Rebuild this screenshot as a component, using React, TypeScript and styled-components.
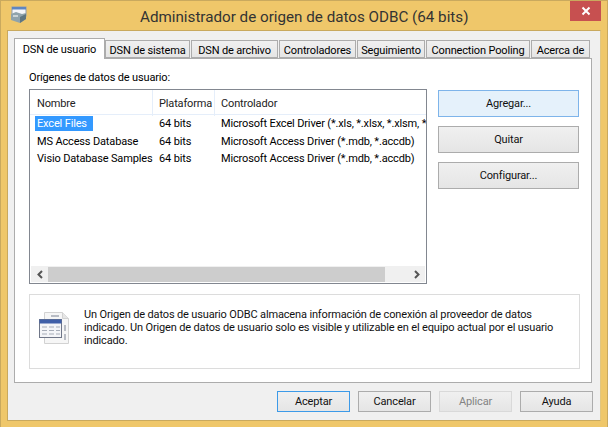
import styled, { createGlobalStyle } from "styled-components";

const GlobalStyle = createGlobalStyle`
  html, body {
    margin: 0;
    padding: 0;
    background: #efc76a;
  }
  * {
    box-sizing: border-box;
  }
`;

const Window = styled.div`
  width: 608px;
  height: 427px;
  display: flex;
  flex-direction: column;
  padding: 0 6px 6px 6px;
  background: #efc76a;
  border: 1px solid #c9a95e;
  border-bottom: 0;
  overflow: hidden;
  font-family: Roboto, "Open Sans", sans-serif;
  font-size: 11px;
  letter-spacing: -0.15px;
  color: #000;
`;

const TitleBar = styled.div`
  height: 29px;
  flex: none;
  display: flex;
  align-items: flex-start;
`;

const TitleIcon = styled.svg`
  width: 18px;
  height: 18px;
  margin: 5px 0 0 3px;
  flex: none;
`;

const Title = styled.div`
  flex: 1;
  margin: 5px 0 0 112px;
  font-size: 15.2px;
  letter-spacing: 0;
  line-height: 22px;
  color: #333;
  white-space: nowrap;
`;

const CloseButton = styled.div`
  width: 31px;
  height: 20px;
  display: flex;
  align-items: center;
  justify-content: center;
  background: #c75050;
`;

const Body = styled.div`
  flex: 1;
  display: flex;
  flex-direction: column;
  padding: 7px 7px 0 6px;
  background: #f0f0f0;
  border: 1px solid #c9a95e;
  border-right-color: #e2c67f;
`;

const TabRow = styled.div`
  display: flex;
  align-items: flex-end;
  height: 20px;
  position: relative;
  z-index: 1;
`;

const Tab = styled.div<{ $width: number; $active?: boolean }>`
  width: ${(p) => p.$width}px;
  height: ${(p) => (p.$active ? 21 : 18)}px;
  margin-right: ${(p) => (p.$active ? 0 : 1)}px;
  margin-bottom: ${(p) => (p.$active ? -1 : 0)}px;
  padding-top: ${(p) => (p.$active ? 0 : 2)}px;
  display: flex;
  align-items: center;
  justify-content: center;
  background: ${(p) => (p.$active ? "#fff" : "linear-gradient(#f0f0f0, #e5e5e5)")};
  border: 1px solid #acacac;
  border-bottom: ${(p) => (p.$active ? "0" : "1px solid #acacac")};
  white-space: nowrap;
  overflow: hidden;
`;

const Panel = styled.div`
  width: 578px;
  height: 325px;
  display: flex;
  flex-direction: column;
  padding: 10px 10px 0 14px;
  background: #fff;
  border: 1px solid #acacac;
`;

const FieldLabel = styled.div`
  height: 16px;
  padding-top: 1px;
  line-height: 16px;
  margin-bottom: 4px;
`;

const Columns = styled.div`
  display: flex;
  gap: 11px;
`;

const ListBox = styled.div`
  width: 398px;
  height: 195px;
  display: flex;
  flex-direction: column;
  border: 1px solid #828790;
`;

const ListHeader = styled.div`
  height: 25px;
  flex: none;
  display: grid;
  grid-template-columns: 123px 62px 1fr;
  border-bottom: 1px solid #e5eefa;
`;

const HeaderCell = styled.div<{ $inset: number; $last?: boolean }>`
  padding-top: 1px;
  line-height: 25px;
  padding-left: ${(p) => p.$inset}px;
  color: #222;
  border-right: ${(p) => (p.$last ? "0" : "1px solid #e5eefa")};
`;

const Rows = styled.div`
  flex: 1;
`;

const ListRow = styled.div`
  height: 17.5px;
  display: grid;
  grid-template-columns: 124px 62px 1fr;
  padding-left: 5px;
  align-items: center;
  white-space: nowrap;
  overflow: hidden;
`;

const NameCell = styled.div`
  padding-left: 2px;
`;

const SelectedName = styled.span`
  display: inline-block;
  width: 58px;
  margin-left: -2px;
  padding-left: 2px;
  line-height: 15px;
  background: #3399ff;
  color: #fff;
`;

const Cell = styled.div`
  overflow: hidden;
`;

const ScrollBar = styled.div`
  height: 16px;
  flex: none;
  margin: 0 1px 1px 1px;
  display: flex;
  align-items: center;
  background: #f0f0f0;
`;

const ScrollArrow = styled.div`
  width: 17px;
  flex: none;
  display: flex;
  justify-content: center;
`;

const ScrollThumb = styled.div`
  width: 337px;
  height: 15px;
  background: #cdcdcd;
`;

const ScrollRest = styled.div`
  flex: 1;
`;

const SideButtons = styled.div`
  width: 141px;
  display: flex;
  flex-direction: column;
  gap: 9px;
  padding-top: 1px;
`;

const Button = styled.div<{ $hot?: boolean; $default?: boolean; $disabled?: boolean }>`
  display: flex;
  align-items: center;
  justify-content: center;
  background: ${(p) => (p.$hot ? "#e5f1fb" : "linear-gradient(#f0f0f0, #e5e5e5)")};
  border: 1px solid
    ${(p) => (p.$hot ? "#7eb4ea" : p.$default ? "#3c9ae8" : p.$disabled ? "#d9d9d9" : "#acacac")};
  color: ${(p) => (p.$disabled ? "#838383" : "#111")};
`;

const SideButton = styled(Button)`
  height: 27px;
`;

const InfoBox = styled.div`
  width: 551px;
  height: 75px;
  margin-top: 10px;
  display: flex;
  align-items: flex-start;
  padding: 13px 9px 0 9px;
  background: #fff;
  border: 1px solid #dcdcdc;
`;

const InfoIcon = styled.svg`
  width: 32px;
  height: 36px;
  flex: none;
  margin-top: 3px;
`;

const InfoText = styled.div`
  width: 472px;
  margin-left: 13px;
  line-height: 13px;
  color: #111;
`;

const Footer = styled.div`
  display: flex;
  justify-content: flex-end;
  gap: 8px;
  margin-top: 8px;
`;

const FooterButton = styled(Button)`
  width: 73px;
  height: 21px;
`;

const tabs = [
  { label: "DSN de usuario", width: 91, active: true },
  { label: "DSN de sistema", width: 85 },
  { label: "DSN de archivo", width: 87 },
  { label: "Controladores", width: 77 },
  { label: "Seguimiento", width: 68 },
  { label: "Connection Pooling", width: 104 },
  { label: "Acerca de", width: 59 },
];

const sources = [
  { name: "Excel Files", driver: "Microsoft Excel Driver (*.xls, *.xlsx, *.xlsm, *.xlsb)", selected: true },
  { name: "MS Access Database", driver: "Microsoft Access Driver (*.mdb, *.accdb)" },
  { name: "Visio Database Samples", driver: "Microsoft Access Driver (*.mdb, *.accdb)" },
];

export default function App() {
  return (
    <>
      <GlobalStyle />
      <Window>
        <TitleBar>
          <TitleIcon viewBox="0 0 18 18">
            <rect x="2" y="1" width="14" height="9" fill="#f4f6fa" stroke="#8d9cb0" />
            <rect x="2" y="1" width="14" height="2.5" fill="#5f86c0" />
            <path d="M1 8l5-2 6 2 4-1v6l-6 4-9-3z" fill="#8fa3ac" />
            <path d="M10 11l6-3v5l-6 4z" fill="#5f7680" />
            <path d="M3 9h5v2H3z" fill="#c9d3d6" />
          </TitleIcon>
          <Title>Administrador de origen de datos ODBC (64 bits)</Title>
          <CloseButton>
            <svg width="10" height="10" viewBox="0 0 10 10">
              <path d="M1.5 1.5l7 7M8.500 1.5l-7 7" stroke="#fff" strokeWidth="2" />
            </svg>
          </CloseButton>
        </TitleBar>
        <Body>
          <TabRow>
            {tabs.map((tab) => (
              <Tab key={tab.label} $width={tab.width} $active={tab.active}>
                {tab.label}
              </Tab>
            ))}
          </TabRow>
          <Panel>
            <FieldLabel>Orígenes de datos de usuario:</FieldLabel>
            <Columns>
              <ListBox>
                <ListHeader>
                  <HeaderCell $inset={7}>Nombre</HeaderCell>
                  <HeaderCell $inset={6}>Plataforma</HeaderCell>
                  <HeaderCell $inset={6} $last>
                    Controlador
                  </HeaderCell>
                </ListHeader>
                <Rows>
                  {sources.map((source) => (
                    <ListRow key={source.name}>
                      <NameCell>
                        {source.selected ? <SelectedName>{source.name}</SelectedName> : source.name}
                      </NameCell>
                      <Cell>64 bits</Cell>
                      <Cell>{source.driver}</Cell>
                    </ListRow>
                  ))}
                </Rows>
                <ScrollBar>
                  <ScrollArrow>
                    <svg width="6" height="9" viewBox="0 0 6 9">
                      <path d="M5 1L1.500 4.500 5 8" fill="none" stroke="#555" strokeWidth="2" />
                    </svg>
                  </ScrollArrow>
                  <ScrollThumb />
                  <ScrollRest />
                  <ScrollArrow>
                    <svg width="6" height="9" viewBox="0 0 6 9">
                      <path d="M1 1l3.500 3.500L1 8" fill="none" stroke="#555" strokeWidth="2" />
                    </svg>
                  </ScrollArrow>
                </ScrollBar>
              </ListBox>
              <SideButtons>
                <SideButton $hot>Agregar...</SideButton>
                <SideButton>Quitar</SideButton>
                <SideButton>Configurar...</SideButton>
              </SideButtons>
            </Columns>
            <InfoBox>
              <InfoIcon viewBox="0 0 32 36">
                <path d="M5.500 1.500h18l6 6v25h-24z" fill="#f6f6f6" stroke="#d2d2d2" />
                <path d="M23.500 1.500v6h6" fill="#e6e6e6" stroke="#d2d2d2" />
                <path d="M12 5h8M26 14v6M26 23v6" stroke="#b8bcc4" strokeWidth="2" />
                <rect x="0.500" y="8.500" width="22" height="18" fill="#f4f5f8" stroke="#6f7688" />
                <rect x="0.500" y="8.500" width="22" height="4" fill="#3f5fa8" />
                <path d="M3 16h5M10 16h5M17 16h4M3 19.500h5M10 19.500h5M17 19.500h4M3 23h5M10 23h5M17 23h4" stroke="#a7adb8" />
              </InfoIcon>
              <InfoText>
                Un Origen de datos de usuario ODBC almacena información de conexión al proveedor de datos indicado. Un
                Origen de datos de usuario solo es visible y utilizable en el equipo actual por el usuario indicado.
              </InfoText>
            </InfoBox>
          </Panel>
          <Footer>
            <FooterButton $default>Aceptar</FooterButton>
            <FooterButton>Cancelar</FooterButton>
            <FooterButton $disabled>Aplicar</FooterButton>
            <FooterButton>Ayuda</FooterButton>
          </Footer>
        </Body>
      </Window>
    </>
  );
}
